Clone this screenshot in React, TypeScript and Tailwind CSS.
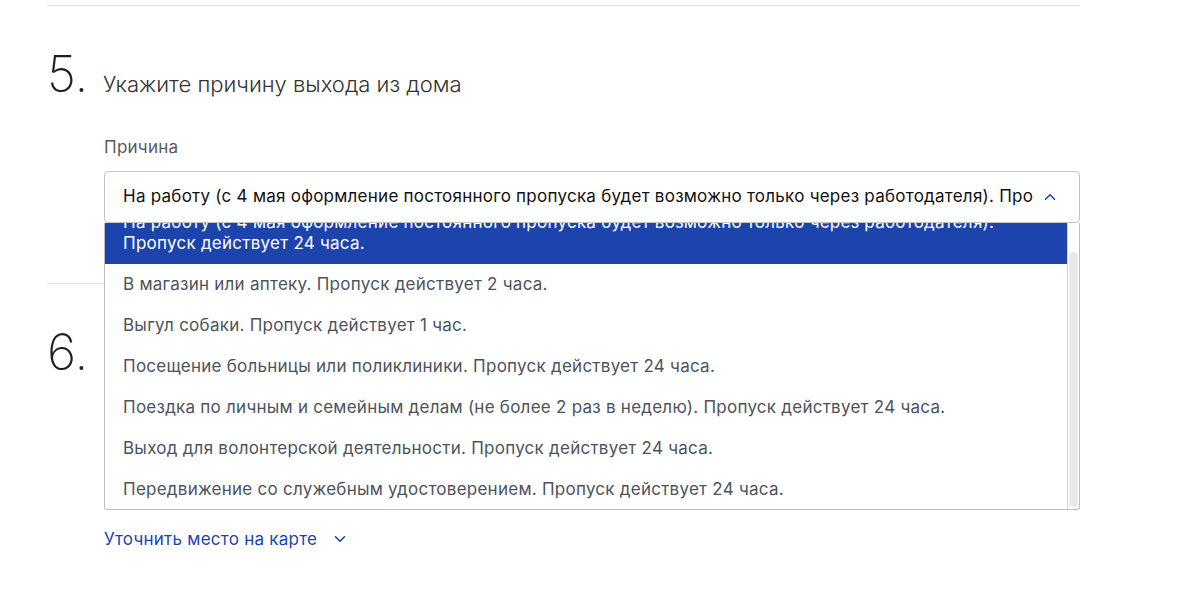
import { useState } from 'react';

const OPTIONS = [
  'На работу (с 4 мая оформление постоянного пропуска будет возможно только через работодателя). Пропуск действует 24 часа.',
  'В магазин или аптеку. Пропуск действует 2 часа.',
  'Выгул собаки. Пропуск действует 1 час.',
  'Посещение больницы или поликлиники. Пропуск действует 24 часа.',
  'Поездка по личным и семейным делам (не более 2 раз в неделю). Пропуск действует 24 часа.',
  'Выход для волонтерской деятельности. Пропуск действует 24 часа.',
  'Передвижение со служебным удостоверением. Пропуск действует 24 часа.',
];

function Chevron({ up }: { up?: boolean }) {
  return (
    <svg width="12" height="8" viewBox="0 0 12 8" fill="none" className={up ? 'rotate-180' : ''}>
      <path d="M1.5 1.75 6 6.25l4.5-4.5" stroke="#1c44b4" strokeWidth="1.6" strokeLinecap="round" strokeLinejoin="round" />
    </svg>
  );
}

export default function App() {
  const [selected, setSelected] = useState(0);

  return (
    <main className="min-h-screen bg-white font-['Inter','Liberation_Sans',sans-serif]">
      <div className="ml-[47px] w-[1033px]">
        <div className="mt-[5px] h-px bg-[#e2e2e2]" />

        {/* Step 5 */}
        <section className="pt-[43px] pb-[60px]">
          <div className="flex items-baseline h-[50px]">
            <span className="w-[56px] text-[50px] leading-[50px] font-extralight text-[#1f1f1f]">5.</span>
            <h2 className="text-[22px] font-light text-[#333]">Укажите причину выхода из дома</h2>
          </div>

          <div className="ml-[57px] mt-[36px] text-[17px] tracking-[0.25px]">
            <div className="leading-[24px] text-[#555b63] mb-[12px]">Причина</div>
            <div className="relative z-10">
              <div className="flex items-center h-[52px] border border-[#c4c4c4] rounded-[4px] pl-[18px] pr-[23px]">
                <span className="flex-1 text-[#111] whitespace-nowrap overflow-hidden">{OPTIONS[selected]}</span>
                <span className="ml-[11px]">
                  <Chevron up />
                </span>
              </div>

              {/* Open list */}
              <div className="absolute left-0 right-0 top-full flex h-[287px] overflow-hidden border border-t-0 border-[#bdbdbd] rounded-b-[3px] bg-white">
                <ul className="flex-1 -mt-[21px]">
                  {OPTIONS.map((o, i) => (
                    <li
                      key={i}
                      onClick={() => setSelected(i)}
                      className={`px-[18px] py-[10px] leading-[21px] ${
                        i === selected ? 'bg-[#1d43ad] text-white' : 'text-[#4c535d]'
                      }`}
                    >
                      {o}
                    </li>
                  ))}
                </ul>
                <div className="w-[12px] border-l border-[#d4d4d4] pt-[29px] pb-[2px] px-[1px]">
                  <div className="h-full rounded-[4px] bg-[#e8e8ea]" />
                </div>
              </div>
            </div>
          </div>
        </section>

        <div className="h-px bg-[#e2e2e2]" />

        {/* Step 6 */}
        <section className="pt-[43px]">
          <div className="flex items-baseline h-[50px]">
            <span className="w-[56px] text-[50px] leading-[50px] font-extralight text-[#1f1f1f]">6.</span>
          </div>

          <div className="ml-[57px] mt-[36px] text-[17px] tracking-[0.25px]">
            <div className="h-[24px] mb-[12px]" />
            <div className="h-[52px] border border-[#c4c4c4] rounded-[4px]" />

            <button className="mt-[26px] flex items-center gap-[17px] leading-[24px] text-[#1c44b4]">
              Уточнить место на карте
              <Chevron />
            </button>
          </div>
        </section>
      </div>
    </main>
  );
}
